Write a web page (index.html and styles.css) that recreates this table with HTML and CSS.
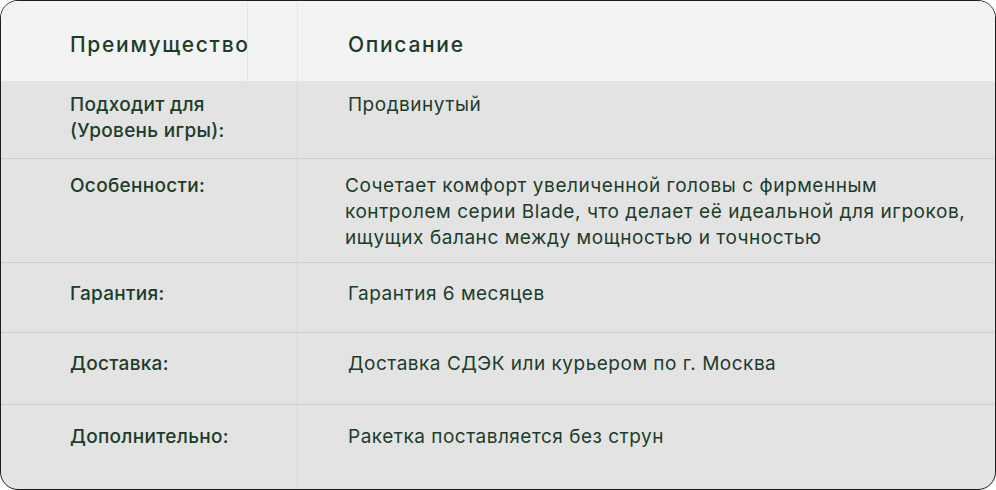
FILE: index.html
```html
<!DOCTYPE html>
<html lang="ru">
<head>
<meta charset="utf-8">
<link rel="stylesheet" href="styles.css">
</head>
<body>
<div class="card">
  <div class="row head">
    <div class="cell key"><span class="key-inner">Преимущество</span></div>
    <div class="cell val">Описание</div>
  </div>
  <div class="row r1">
    <div class="cell key">Подходит для<br>(Уровень игры):</div>
    <div class="cell val">Продвинутый</div>
  </div>
  <div class="row r2">
    <div class="cell key">Особенности:</div>
    <div class="cell val shift">Сочетает комфорт увеличенной головы с фирменным контролем серии Blade, что делает её идеальной для игроков, ищущих баланс между мощностью и точностью</div>
  </div>
  <div class="row r3">
    <div class="cell key">Гарантия:</div>
    <div class="cell val">Гарантия 6 месяцев</div>
  </div>
  <div class="row r4">
    <div class="cell key">Доставка:</div>
    <div class="cell val">Доставка СДЭК или курьером по г. Москва</div>
  </div>
  <div class="row r5">
    <div class="cell key">Дополнительно:</div>
    <div class="cell val">Ракетка поставляется без струн</div>
  </div>
</div>
</body>
</html>
```
FILE: styles.css
```css
html, body {
  margin: 0;
  padding: 0;
  background: #ffffff;
}
body {
  font-family: Inter, "Noto Sans", sans-serif;
  color: #1b3d29;
}
.card {
  width: 996px;
  height: 490px;
  box-sizing: border-box;
  border: 1px solid #1e1e1e;
  border-radius: 18px;
  overflow: hidden;
  background: #e3e3e3;
  display: flex;
  flex-direction: column;
}
.row {
  display: grid;
  grid-template-columns: 297px 1fr;
  border-bottom: 1px solid #cfcfcf;
  font-size: 19px;
  line-height: 26px;
  letter-spacing: 0.5px;
}
.row:last-child {
  border-bottom: none;
  flex: 1;
}
.cell.key {
  padding-left: 69px;
  border-right: 1px solid #d8d8d8;
  font-weight: 500;
  letter-spacing: 0.3px;
}
.cell.val {
  padding-left: 50px;
  font-weight: 400;
}
.cell.val.shift {
  padding-left: 47px;
  padding-right: 24px;
  letter-spacing: 0.55px;
}
.head {
  background: #f3f3f3;
  height: 80px;
  align-items: center;
  font-size: 21px;
  border-bottom: none;
}
.head .cell {
  height: 100%;
  display: flex;
  align-items: center;
  padding-top: 8px;
  box-sizing: border-box;
  font-weight: 500;
  letter-spacing: 1.7px;
}
.head .cell.key {
  border-right: 1px solid #e6e6e6;
  padding-left: 0;
  padding-top: 0;
}
.key-inner {
  width: 247px;
  height: 80px;
  box-sizing: border-box;
  padding-left: 69px;
  padding-top: 8px;
  display: flex;
  align-items: center;
  border-right: 1px solid #e6e6e6;
  white-space: nowrap;
}
.r1 .cell { padding-top: 11px; padding-bottom: 14px; }
.r2 .cell { padding-top: 14px; padding-bottom: 11px; }
.r3 .cell { padding-top: 18px; padding-bottom: 25px; }
.r4 .cell { padding-top: 18px; padding-bottom: 27px; }
.r5 .cell { padding-top: 19px; }
```
